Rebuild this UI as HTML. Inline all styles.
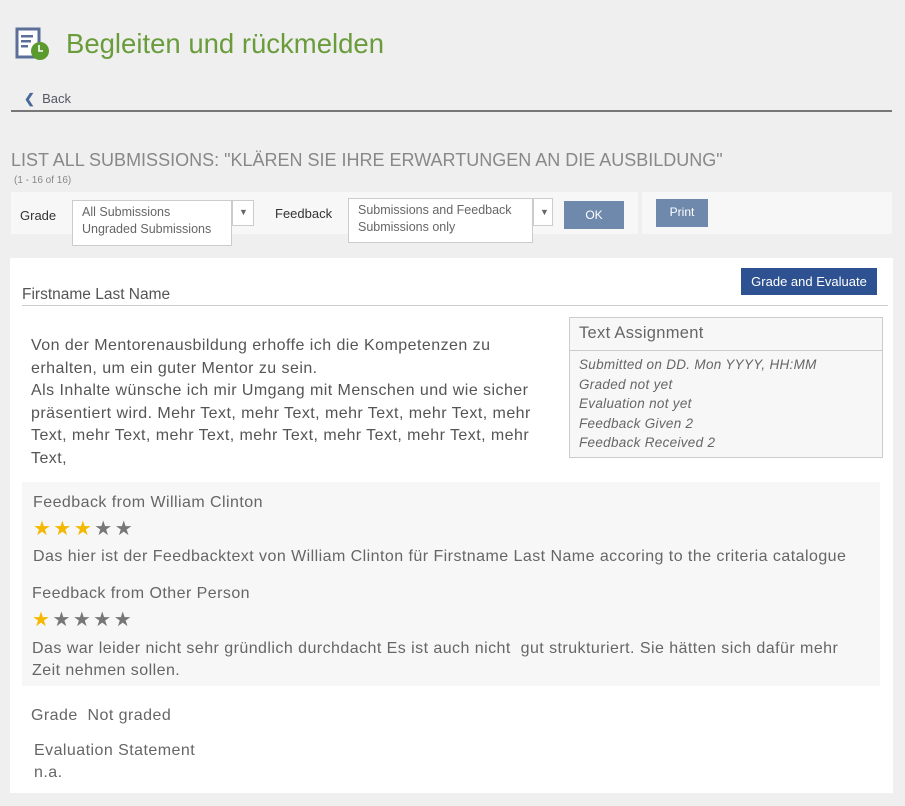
<!DOCTYPE html>
<html><head><meta charset="utf-8"><style>
*{margin:0;padding:0;box-sizing:border-box}
body{width:905px;height:806px;background:#efefef;font-family:"Liberation Sans",sans-serif;color:#555;position:relative;overflow:hidden}
.a{position:absolute;white-space:nowrap}
.sel{position:absolute;background:#fff;border:1px solid #ccc;font-size:12.5px;color:#666;line-height:17px;padding:3px 9px}
.btn{position:absolute;background:#6f89ad;color:#fff;font-size:12px;text-align:center}
.it{font-style:italic;font-size:13.5px;color:#666;line-height:19.5px;letter-spacing:0.3px}
.star{font-size:20px;letter-spacing:2.5px}
.t{font-size:16px;letter-spacing:0.45px;color:#666}
</style></head><body>
<svg class="a" style="left:15px;top:27px" width="36" height="36" viewBox="0 0 36 36">
<rect x="2" y="2" width="22" height="28" fill="#fff" stroke="#5b6f9a" stroke-width="3"/>
<rect x="6" y="8" width="12" height="2.5" fill="#5b6f9a"/><rect x="6" y="13" width="10" height="2.5" fill="#5b6f9a"/><rect x="6" y="18" width="7" height="2.5" fill="#5b6f9a"/>
<circle cx="25" cy="24" r="9" fill="#5b9a2c"/><path d="M24 18v6h4" stroke="#fff" stroke-width="1.6" fill="none"/></svg>
<div class="a" style="left:66px;top:28px;font-size:27.5px;color:#6a9c3c">Begleiten und rückmelden</div>
<div class="a" style="left:24px;top:91px;font-size:13px;color:#556"><span style="font-weight:bold;color:#4a6a9a">&#x276E;</span>&nbsp; Back</div>
<div class="a" style="left:11px;top:110px;width:881px;height:2px;background:#777"></div>
<div class="a" style="left:11px;top:150px;font-size:18px;color:#888">LIST ALL SUBMISSIONS: "KLÄREN SIE IHRE ERWARTUNGEN AN DIE AUSBILDUNG"</div>
<div class="a" style="left:14px;top:175px;font-size:10px;color:#888">(1 - 16 of 16)</div>
<div class="a" style="left:11px;top:192px;width:627px;height:42px;background:#f7f7f7"></div>
<div class="a" style="left:642px;top:192px;width:250px;height:42px;background:#f7f7f7"></div>
<div class="a" style="left:20px;top:208px;font-size:13px;color:#333">Grade</div>
<div class="sel" style="left:72px;top:200px;width:160px;height:46px">All Submissions<br>Ungraded Submissions</div>
<div class="sel" style="left:232px;top:200px;width:22px;height:26px;padding:3px 6px;font-size:9px">▼</div>
<div class="a" style="left:275px;top:206px;font-size:13px;color:#333">Feedback</div>
<div class="sel" style="left:348px;top:198px;width:185px;height:45px">Submissions and Feedback<br>Submissions only</div>
<div class="sel" style="left:533px;top:198px;width:20px;height:28px;padding:5px 6px;font-size:9px">▼</div>
<div class="btn" style="left:564px;top:201px;width:60px;height:28px;line-height:28px">OK</div>
<div class="btn" style="left:656px;top:199px;width:52px;height:28px;line-height:26px">Print</div>
<div class="a" style="left:10px;top:258px;width:883px;height:535px;background:#fff"></div>
<div class="a" style="left:22px;top:286px;font-size:15.5px;color:#555">Firstname Last Name</div>
<div class="a" style="left:22px;top:305px;width:866px;height:1px;background:#ccc"></div>
<div class="btn" style="left:741px;top:268px;width:136px;height:27px;line-height:27px;background:#2e5291;font-size:13px">Grade and Evaluate</div>
<div class="a t" style="left:31px;top:335px;line-height:22.5px;color:#555;white-space:normal;width:516px">Von der Mentorenausbildung erhoffe ich die Kompetenzen zu erhalten, um ein guter Mentor zu sein.<br>Als Inhalte wünsche ich mir Umgang mit Menschen und wie sicher präsentiert wird. Mehr Text, mehr Text, mehr Text, mehr Text, mehr Text, mehr Text, mehr Text, mehr Text, mehr Text, mehr Text, mehr Text,</div>
<div class="a" style="left:569px;top:317px;width:314px;height:141px;background:#f7f7f7;border:1px solid #ccc"></div>
<div class="a" style="left:569px;top:350px;width:314px;height:1px;background:#ccc"></div>
<div class="a" style="left:579px;top:324px;font-size:16.5px;color:#666;letter-spacing:0.3px">Text Assignment</div>
<div class="a it" style="left:579px;top:355px">Submitted on DD. Mon YYYY, HH:MM<br>Graded not yet<br>Evaluation not yet<br>Feedback Given 2<br>Feedback Received 2</div>
<div class="a" style="left:22px;top:482px;width:858px;height:204px;background:#f7f7f7"></div>
<div class="a t" style="left:33px;top:494px">Feedback from William Clinton</div>
<div class="a star" style="left:33px;top:516px"><span style="color:#f5b800">★★★</span><span style="color:#777">★★</span></div>
<div class="a t" style="left:33px;top:548px">Das hier ist der Feedbacktext von William Clinton für Firstname Last Name accoring to the criteria catalogue</div>
<div class="a t" style="left:32px;top:585px">Feedback from Other Person</div>
<div class="a star" style="left:32px;top:607px"><span style="color:#f5b800">★</span><span style="color:#777">★★★★</span></div>
<div class="a t" style="left:32px;top:638px;line-height:22px">Das war leider nicht sehr gründlich durchdacht Es ist auch nicht &nbsp;gut strukturiert. Sie hätten sich dafür mehr<br>Zeit nehmen sollen.</div>
<div class="a t" style="left:31px;top:707px">Grade &nbsp;Not graded</div>
<div class="a t" style="left:34px;top:740px;line-height:22px">Evaluation Statement<br>n.a.</div>
</body></html>
